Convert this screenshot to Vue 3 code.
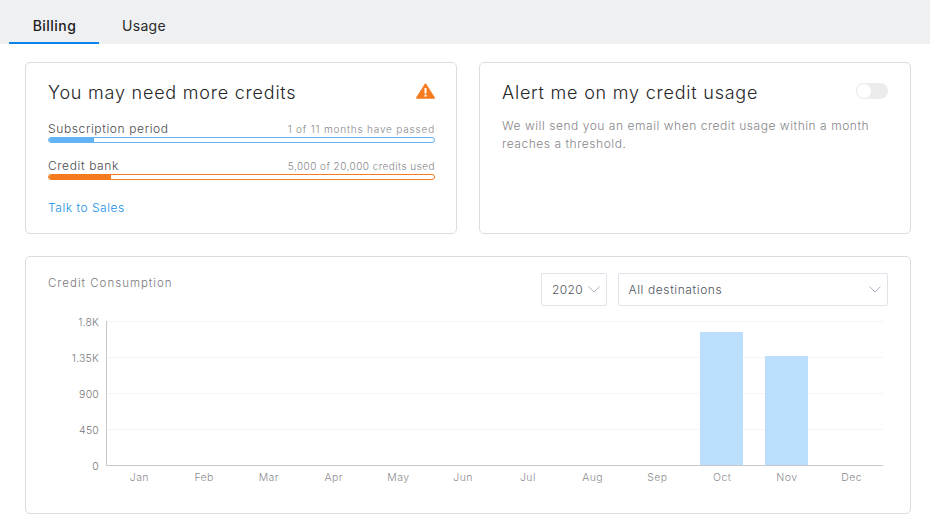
<script setup>
const months = ['Jan','Feb','Mar','Apr','May','Jun','Jul','Aug','Sep','Oct','Nov','Dec']
const ticks = [
  { label: '1.8K', y: 0 },
  { label: '1.35K', y: 36 },
  { label: '900', y: 72 },
  { label: '450', y: 108 },
  { label: '0', y: 144 }
]
const bars = [
  { month: 'Oct', x: 701, value: 133 },
  { month: 'Nov', x: 766, value: 109 }
]
const monthX = (i) => 108 + 64.75 * (i + 0.5)
</script>

<template>
  <div class="page">
    <nav class="tabs">
      <a class="tab active">Billing</a>
      <a class="tab">Usage</a>
    </nav>
    <main class="content">
      <div class="top-row">
        <section class="card credits">
          <header class="card-head">
            <h2>You may need more credits</h2>
            <svg class="warn" width="19" height="16" viewBox="0 0 19 16">
              <path d="M9.5 1.2 L18.2 15 H0.8 Z" fill="#f47b20" stroke="#f47b20" stroke-width="1.5" stroke-linejoin="round" />
              <rect x="8.5" y="5" width="2" height="5.5" fill="#fff" />
              <rect x="8.5" y="11.6" width="2" height="2" fill="#fff" />
            </svg>
          </header>
          <div class="meter-label">
            <span>Subscription period</span>
            <small>1 of 11 months have passed</small>
          </div>
          <div class="meter blue"><div class="fill" style="width: 11.7%"></div></div>
          <div class="meter-label second">
            <span>Credit bank</span>
            <small>5,000 of 20,000 credits used</small>
          </div>
          <div class="meter orange"><div class="fill" style="width: 16.2%"></div></div>
          <a class="sales">Talk to Sales</a>
        </section>
        <section class="card alert">
          <header class="card-head">
            <h2>Alert me on my credit usage</h2>
            <span class="toggle"><span class="knob"></span></span>
          </header>
          <p>We will send you an email when credit usage within a month reaches a threshold.</p>
        </section>
      </div>
      <section class="card chart-card">
        <div class="chart-head">
          <h3>Credit Consumption</h3>
          <div class="selects">
            <div class="select year">
              <span>2020</span>
              <svg width="12" height="7" viewBox="0 0 12 7"><path d="M0.5 0.5 L6 6 L11.5 0.5" fill="none" stroke="#a9b3c2" stroke-width="1" /></svg>
            </div>
            <div class="select dest">
              <span>All destinations</span>
              <svg width="12" height="7" viewBox="0 0 12 7"><path d="M0.5 0.5 L6 6 L11.5 0.5" fill="none" stroke="#a9b3c2" stroke-width="1" /></svg>
            </div>
          </div>
        </div>
        <svg class="chart" width="886" height="172" viewBox="25 312 886 172">
          <g v-for="t in ticks" :key="t.label">
            <line x1="107" x2="884" :y1="321.5 + t.y" :y2="321.5 + t.y" stroke="#f5f5f6" />
            <text x="100" :y="325.5 + t.y" text-anchor="end" class="tick">{{ t.label }}</text>
          </g>
          <rect v-for="b in bars" :key="b.month" :x="b.x" :y="465 - b.value" width="43" :height="b.value" fill="#bbdefd" />
          <line x1="107.5" x2="107.5" y1="321" y2="466" stroke="#c9c9cc" />
          <line x1="107" x2="884" y1="465.5" y2="465.5" stroke="#c9c9cc" />
          <text v-for="(m, i) in months" :key="m" :x="monthX(i)" y="481" text-anchor="middle" class="tick month">{{ m }}</text>
        </svg>
      </section>
    </main>
  </div>
</template>

<style>
html, body { margin: 0; background: #fff; }
</style>

<style scoped>
.page {
  width: 930px;
  height: 524px;
  overflow: hidden;
  font-family: "Inter", "Lato", sans-serif;
  color: #2b2b2e;
}
.tabs {
  display: flex;
  height: 44px;
  box-sizing: border-box;
  padding-left: 9px;
  background: #eef0f2;
}
.tab {
  font-size: 14px;
  line-height: 51px;
  height: 44px;
  box-sizing: border-box;
  color: #2a2a2c;
  letter-spacing: 0.3px;
}
.tab.active {
  width: 90px;
  padding-left: 1px;
  text-align: center;
  font-weight: 500;
  letter-spacing: 0.45px;
  border-bottom: 2px solid #0a84e8;
  color: #1c1c1e;
}
.tab:not(.active) { margin-left: 23px; }
.content {
  padding: 18px 19px 0 25px;
  display: flex;
  flex-direction: column;
  gap: 22px;
}
.top-row {
  display: flex;
  gap: 22px;
}
.card {
  box-sizing: border-box;
  border: 1px solid #dcdcdf;
  border-radius: 5px;
  background: #fff;
}
.credits, .alert {
  width: 432px;
  height: 172px;
  padding: 0 21px 0 22px;
}
.card-head {
  height: 56px;
  display: flex;
  align-items: center;
  justify-content: space-between;
}
.card-head h2 {
  margin: 2px 0 0;
  font-size: 18px;
  font-weight: 350;
  letter-spacing: 0.78px;
  color: #262628;
}
.meter-label {
  display: flex;
  justify-content: space-between;
  align-items: baseline;
  height: 17px;
  margin-top: 1px;
  font-size: 12px;
  font-weight: 350;
  line-height: 17px;
  letter-spacing: 0.62px;
  color: #4a4a4e;
}
.meter-label small {
  font-size: 10px;
  letter-spacing: 0.82px;
  color: #87878b;
}
.meter-label.second small { letter-spacing: 0.45px; }
.meter-label.second { margin-top: 14px; }
.meter {
  box-sizing: border-box;
  height: 6px;
  border: 1px solid;
  border-radius: 3px;
  overflow: hidden;
}
.meter .fill { height: 100%; }
.meter.blue { border-color: #62b3f5; }
.meter.blue .fill { background: #62b3f5; }
.meter.orange { border-color: #f47b20; }
.meter.orange .fill { background: #f47b20; }
.sales {
  display: block;
  margin-top: 20px;
  font-size: 12px;
  font-weight: 350;
  line-height: 16px;
  letter-spacing: 0.52px;
  color: #1a8fe8;
}
.toggle {
  width: 32px;
  height: 16px;
  margin-right: 1px;
  border-radius: 8px;
  background: #ececec;
  position: relative;
}
.knob {
  position: absolute;
  left: 0;
  top: 0;
  width: 16px;
  height: 16px;
  box-sizing: border-box;
  border-radius: 50%;
  background: #fff;
  border: 1px solid #ececec;
}
.alert p {
  margin: -2px 0 0;
  font-size: 12px;
  font-weight: 350;
  line-height: 18px;
  letter-spacing: 0.54px;
  color: #86868a;
}
.chart-card {
  width: 886px;
  height: 258px;
  position: relative;
}
.chart-head {
  display: flex;
  justify-content: space-between;
  padding: 16px 22px 0;
  height: 55px;
  box-sizing: border-box;
}
.chart-head h3 {
  margin: 0;
  font-size: 11.5px;
  font-weight: 350;
  line-height: 20px;
  letter-spacing: 1px;
  color: #78787c;
}
.selects {
  display: flex;
  gap: 11px;
}
.select {
  box-sizing: border-box;
  height: 33px;
  display: flex;
  align-items: center;
  justify-content: space-between;
  border: 1px solid #dfe3ea;
  border-radius: 2px;
  padding: 0 6px 0 10px;
  font-size: 12px;
  font-weight: 350;
  letter-spacing: 0.6px;
  color: #4e5460;
}
.year { width: 66px; letter-spacing: 0.4px; }
.dest { width: 270px; padding-left: 9.5px; }
.chart {
  display: block;
  margin-left: -2px;
}
.tick {
  font-size: 10.5px;
  font-weight: 350;
  letter-spacing: 0.2px;
  fill: #78787c;
}
.month { fill: #8c8c90; letter-spacing: 0.4px; }
</style>
